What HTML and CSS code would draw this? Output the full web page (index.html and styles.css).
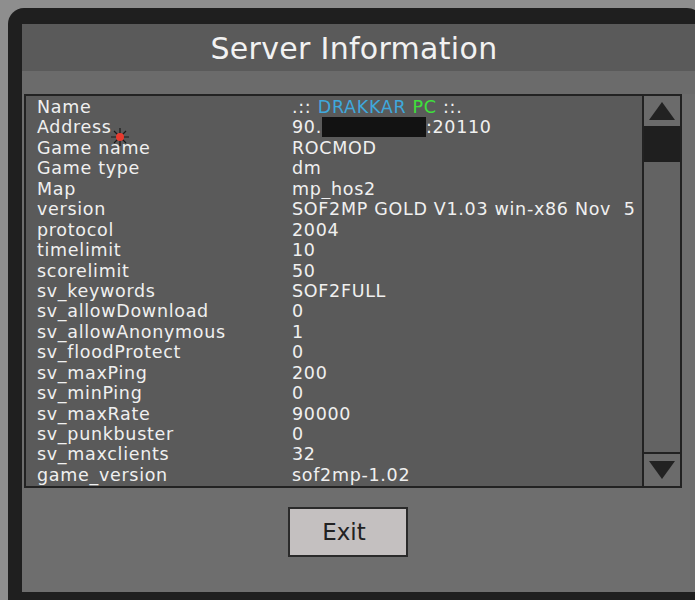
FILE: index.html
```html
<html>
<head>
    <title>Server Information</title>
    <meta http-equiv="Content-Type" content="text/html;charset=UTF-8"/>
    <link rel="stylesheet" href="styles.css">
</head>
<body>
<div class="frame">
    <div class="panel">
        <div class="title">Server Information</div>
        <div class="band"></div>
        <div class="info-box">
            <div class="info-list">
                <div class="row"><span class="key">Name</span><span class="val">.:: <span class="blue">DRAKKAR</span> <span class="green">PC</span> ::.</span></div>
                <div class="row"><span class="key">Address<svg class="spark" width="20" height="20" viewBox="0 0 20 20">
                    <path d="M10 1v6M10 13v6M1 10h6M13 10h6M4 4l4 4M16 4l-4 4M4 16l4-4M16 16l-4-4" stroke="#1a1a1a" stroke-width="1.2"/>
                    <circle cx="10" cy="10" r="4" fill="#e83a2e"/>
                </svg></span><span class="val">90.<span class="redact"></span>:20110</span></div>
                <div class="row"><span class="key">Game name</span><span class="val">ROCMOD</span></div>
                <div class="row"><span class="key">Game type</span><span class="val">dm</span></div>
                <div class="row"><span class="key">Map</span><span class="val">mp_hos2</span></div>
                <div class="row"><span class="key">version</span><span class="val">SOF2MP GOLD V1.03 win-x86 Nov&nbsp; 5</span></div>
                <div class="row"><span class="key">protocol</span><span class="val">2004</span></div>
                <div class="row"><span class="key">timelimit</span><span class="val">10</span></div>
                <div class="row"><span class="key">scorelimit</span><span class="val">50</span></div>
                <div class="row"><span class="key">sv_keywords</span><span class="val">SOF2FULL</span></div>
                <div class="row"><span class="key">sv_allowDownload</span><span class="val">0</span></div>
                <div class="row"><span class="key">sv_allowAnonymous</span><span class="val">1</span></div>
                <div class="row"><span class="key">sv_floodProtect</span><span class="val">0</span></div>
                <div class="row"><span class="key">sv_maxPing</span><span class="val">200</span></div>
                <div class="row"><span class="key">sv_minPing</span><span class="val">0</span></div>
                <div class="row"><span class="key">sv_maxRate</span><span class="val">90000</span></div>
                <div class="row"><span class="key">sv_punkbuster</span><span class="val">0</span></div>
                <div class="row"><span class="key">sv_maxclients</span><span class="val">32</span></div>
                <div class="row"><span class="key">game_version</span><span class="val">sof2mp-1.02</span></div>
            </div>
            <div class="scrollbar">
                <div class="scroll-btn"><span class="arrow-up"></span></div>
                <div class="thumb"></div>
                <div class="track"></div>
                <div class="scroll-btn down"><span class="arrow-down"></span></div>
            </div>
        </div>
        <div class="actions">
            <button class="exit-btn">Exit</button>
        </div>
    </div>
</div>
</body>
</html>
```

FILE: styles.css
```css
body {
    margin: 0;
    background-color: #8e8e8e;
    font-family: "DejaVu Sans", Verdana, sans-serif;
}

.frame {
    margin: 8px 0 0 8px;
    width: 673px;
    height: 576px;
    padding: 16px 8px 8px 14px;
    background-color: #1f1f1f;
    border-radius: 16px 16px 0 0;
}

.panel {
    height: 568px;
    background-color: #6e6e6e;
    display: flex;
    flex-direction: column;
}

.title {
    height: 47px;
    line-height: 50px;
    padding-right: 9px;
    background-color: #5a5a5a;
    color: #f2f2f2;
    font-size: 30px;
    letter-spacing: 0.3px;
    text-align: center;
}

.band {
    height: 23px;
    background-color: #6b6b6b;
}

.info-box {
    display: flex;
    margin-left: 2px;
    width: 654px;
    height: 390px;
    border: solid 2px #222;
    background-color: #5a5a5a;
}

.info-list {
    flex: 1;
    padding: 1px 0 0 11px;
    overflow: hidden;
    color: #f0f0f0;
    font-size: 17.5px;
    letter-spacing: 0.7px;
}

.row {
    display: flex;
    height: 20.45px;
    line-height: 20px;
    white-space: nowrap;
}

.key {
    width: 255px;
    position: relative;
}

.val {
    flex: 1;
    overflow: hidden;
}

.blue {
    color: #3fa8dc;
}

.green {
    color: #3ee03a;
}

.redact {
    display: inline-block;
    width: 104px;
    height: 20px;
    vertical-align: -4px;
    background-color: #121212;
}

.spark {
    position: absolute;
    left: 73px;
    top: 10px;
}

.scrollbar {
    width: 36px;
    border-left: solid 2px #222;
    display: flex;
    flex-direction: column;
}

.scroll-btn {
    height: 30px;
    background-color: #6b6b6b;
    display: flex;
    align-items: center;
    justify-content: center;
}

.scroll-btn.down {
    height: 32px;
    border-top: solid 2px #222;
}

.arrow-up {
    width: 0;
    height: 0;
    border-left: 13px solid transparent;
    border-right: 13px solid transparent;
    border-bottom: 18px solid #222;
}

.arrow-down {
    width: 0;
    height: 0;
    border-left: 13px solid transparent;
    border-right: 13px solid transparent;
    border-top: 18px solid #222;
}

.thumb {
    height: 36px;
    background-color: #1f1f1f;
}

.track {
    flex: 1;
    background-color: #636363;
}

.actions {
    padding-top: 19px;
    padding-left: 266px;
}

.exit-btn {
    width: 120px;
    height: 50px;
    border: solid 2px #2a2a2a;
    background-color: #c4c0c0;
    color: #222;
    font-family: "DejaVu Sans", Verdana, sans-serif;
    font-size: 23px;
    padding: 0 8px 0 0;
}
```
